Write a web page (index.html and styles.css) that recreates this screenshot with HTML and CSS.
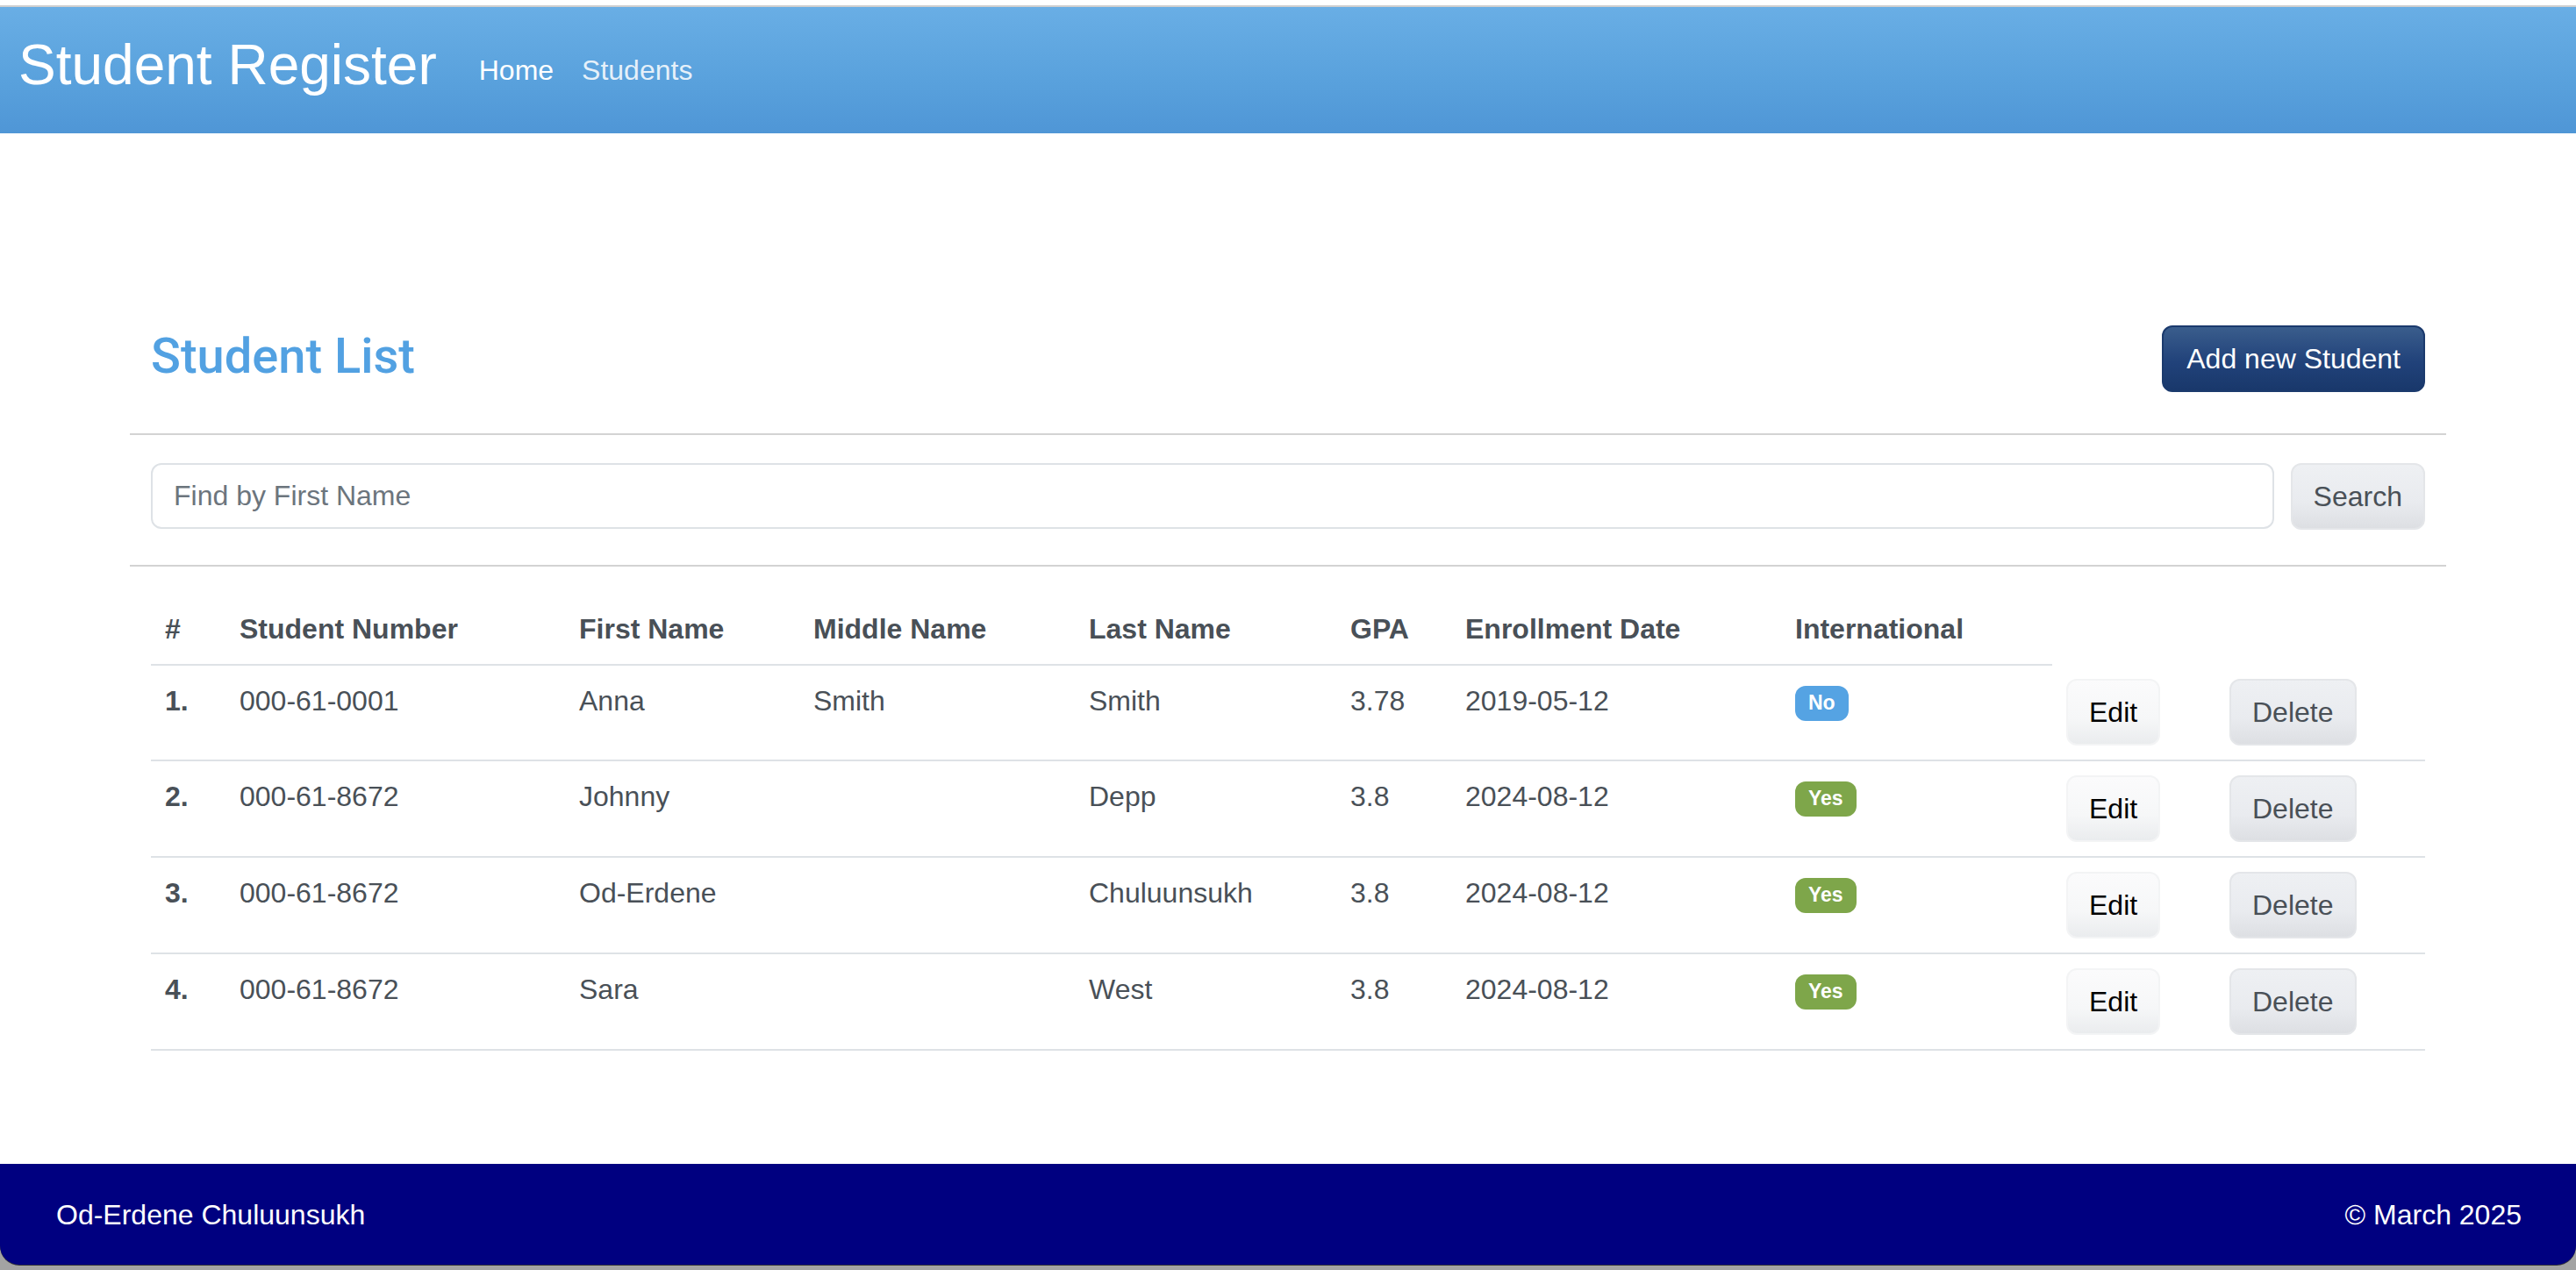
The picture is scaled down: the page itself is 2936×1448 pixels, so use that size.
FILE: index.html
```html
<!DOCTYPE html>
<html lang="en">
<head>
<meta charset="utf-8">
<title>Student Register</title>
<link rel="stylesheet" href="styles.css">
</head>
<body>
<div class="topbar"></div>
<nav class="navbar">
  <a class="brand" href="#">Student Register</a>
  <ul class="nav">
    <li><a class="nav-link active" href="#">Home</a></li>
    <li><a class="nav-link" href="#">Students</a></li>
  </ul>
</nav>
<main class="container">
  <div class="list-header">
    <h3 class="list-title">Student List</h3>
    <button class="btn btn-info" type="button">Add new Student</button>
  </div>
  <hr class="divider divider-top">
  <form class="search-row">
    <input class="search-input" type="text" placeholder="Find by First Name">
    <button class="btn btn-secondary" type="button">Search</button>
  </form>
  <hr class="divider divider-bottom">
  <div class="table-wrap">
    <table class="students">
      <colgroup>
        <col class="c-num"><col class="c-sn"><col class="c-fn"><col class="c-mn"><col class="c-ln">
        <col class="c-gpa"><col class="c-date"><col class="c-int"><col class="c-edit"><col class="c-del">
      </colgroup>
      <thead>
        <tr>
          <th>#</th><th>Student Number</th><th>First Name</th><th>Middle Name</th><th>Last Name</th>
          <th>GPA</th><th>Enrollment Date</th><th>International</th>
        </tr>
      </thead>
      <tbody>
        <tr>
          <th class="rownum">1.</th><td>000-61-0001</td><td>Anna</td><td>Smith</td><td>Smith</td>
          <td>3.78</td><td>2019-05-12</td><td><span class="badge badge-no">No</span></td>
          <td><button class="btn btn-light" type="button">Edit</button></td>
          <td><button class="btn btn-secondary" type="button">Delete</button></td>
        </tr>
        <tr>
          <th class="rownum">2.</th><td>000-61-8672</td><td>Johnny</td><td></td><td>Depp</td>
          <td>3.8</td><td>2024-08-12</td><td><span class="badge badge-yes">Yes</span></td>
          <td><button class="btn btn-light" type="button">Edit</button></td>
          <td><button class="btn btn-secondary" type="button">Delete</button></td>
        </tr>
        <tr>
          <th class="rownum">3.</th><td>000-61-8672</td><td>Od-Erdene</td><td></td><td>Chuluunsukh</td>
          <td>3.8</td><td>2024-08-12</td><td><span class="badge badge-yes">Yes</span></td>
          <td><button class="btn btn-light" type="button">Edit</button></td>
          <td><button class="btn btn-secondary" type="button">Delete</button></td>
        </tr>
        <tr>
          <th class="rownum">4.</th><td>000-61-8672</td><td>Sara</td><td></td><td>West</td>
          <td>3.8</td><td>2024-08-12</td><td><span class="badge badge-yes">Yes</span></td>
          <td><button class="btn btn-light" type="button">Edit</button></td>
          <td><button class="btn btn-secondary" type="button">Delete</button></td>
        </tr>
      </tbody>
    </table>
  </div>
</main>
<div class="bottom">
  <footer class="footer">
    <span class="author">Od-Erdene Chuluunsukh</span>
    <span class="copy">© March 2025</span>
  </footer>
  <div class="statusbar"></div>
</div>
</body>
</html>
```

FILE: styles.css
```css
html, body {
  margin: 0;
  padding: 0;
}

body {
  height: 1448px;
  display: flex;
  flex-direction: column;
  font-family: "Liberation Sans", Arial, sans-serif;
  font-size: 32px;
  line-height: 48px;
  color: #495057;
  background: #ffffff;
  overflow: hidden;
}

.topbar {
  height: 6px;
  background: #ffffff;
  border-bottom: 2px solid #cfcfcf;
  flex: none;
}

.navbar {
  flex: none;
  height: 144px;
  display: flex;
  align-items: center;
  padding: 0 21px;
  background: linear-gradient(#69aee5, #5aa2dd 55%, #4f96d6);
}

.brand {
  font-size: 64px;
  line-height: 72px;
  color: #ffffff;
  text-decoration: none;
  margin-right: 32px;
  margin-bottom: 12px;
}

.nav {
  display: flex;
  list-style: none;
  margin: 0;
  padding: 0;
}

.nav-link {
  display: block;
  padding: 0 16px;
  font-size: 32px;
  line-height: 48px;
  color: rgba(255, 255, 255, 0.86);
  text-decoration: none;
}

.nav-link.active {
  color: #ffffff;
}

.container {
  flex: 1;
  width: 2640px;
  margin: 0 auto;
}

.list-header {
  display: flex;
  justify-content: space-between;
  align-items: center;
  padding: 219px 24px 0;
}

.list-title {
  margin: 0 0 6px;
  font-family: Roboto, "Liberation Sans", sans-serif;
  font-weight: 500;
  font-size: 56px;
  line-height: 68px;
  color: #52a1e2;
}

.divider {
  border: 0;
  border-top: 2px solid #d3d3d3;
  height: 0;
}

.divider-top {
  margin: 47px 0 32px;
}

.divider-bottom {
  margin: 40px 0 31px;
}

.search-row {
  display: flex;
  gap: 19px;
  padding: 0 24px;
  margin: 0;
}

.search-input {
  flex: 1;
  height: 75px;
  box-sizing: border-box;
  border: 2px solid #dee2e6;
  border-radius: 12px;
  padding: 0 24px;
  font-family: "Liberation Sans", Arial, sans-serif;
  font-size: 32px;
  color: #495057;
  outline: none;
}

.search-input::placeholder {
  color: #6c757d;
}

.btn {
  display: inline-block;
  box-sizing: border-box;
  font-family: "Liberation Sans", Arial, sans-serif;
  font-size: 32px;
  line-height: 48px;
  padding: 12px 24px;
  border: 2px solid transparent;
  border-radius: 12px;
  vertical-align: top;
  cursor: pointer;
  text-shadow: 0 1px 0 rgba(0, 0, 0, 0.05);
}

.btn-info {
  color: #ffffff;
  background: linear-gradient(#3a5d8c, #21427a 55%, #19386b);
  border-color: #1b3a6d;
  padding: 12px 26px;
}

.btn-secondary {
  color: #495057;
  background: linear-gradient(#eef0f3, #e9ebef 60%, #dddfe3);
  border-color: #e4e6e9;
}

.btn-light {
  color: #000000;
  background: linear-gradient(#fbfbfc, #f6f7f8 60%, #eaecee);
  border-color: #f3f4f5;
}

.table-wrap {
  padding: 0 24px;
}

.students {
  width: 2592px;
  border-collapse: collapse;
  table-layout: fixed;
}

.c-num { width: 85px; }
.c-sn { width: 387px; }
.c-fn { width: 267px; }
.c-mn { width: 314px; }
.c-ln { width: 298px; }
.c-gpa { width: 131px; }
.c-date { width: 376px; }
.c-int { width: 309px; }
.c-edit { width: 186px; }
.c-del { width: 239px; }

.students th,
.students td {
  padding: 16px;
  text-align: left;
  vertical-align: top;
  white-space: nowrap;
}

.students th {
  font-weight: 700;
}

.students thead th {
  border-bottom: 2px solid #dee2e6;
}

.students tbody th,
.students tbody td {
  border-bottom: 2px solid #dee2e6;
}

.badge {
  display: inline-block;
  font-size: 23px;
  font-weight: 700;
  line-height: 23px;
  padding: 8px 15px 9px;
  border-radius: 12px;
  color: #ffffff;
  vertical-align: 1px;
}

.badge-no {
  background: #55a3e3;
}

.badge-yes {
  background: #7ea64a;
}

.bottom {
  flex: none;
  background: #a3a3a3;
}

.footer {
  height: 115px;
  box-sizing: border-box;
  display: flex;
  justify-content: space-between;
  align-items: center;
  padding: 0 62px 0 64px;
  background: #000080;
  color: #ffffff;
  font-size: 32px;
  border-radius: 0 0 22px 22px;
  box-shadow: 0 1px 0 #3a3a3a;
}

.statusbar {
  height: 6px;
}
```
